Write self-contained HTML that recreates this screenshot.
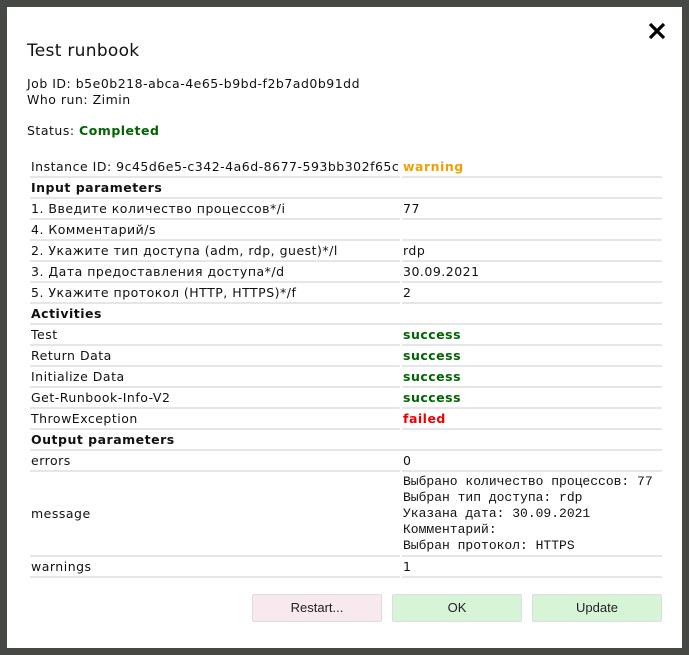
<!DOCTYPE html>
<html><head><meta charset="utf-8"><style>
html,body{margin:0;padding:0;width:689px;height:655px;background:#464844;overflow:hidden}
.dlg{position:absolute;left:7px;top:7px;width:675px;height:641px;background:#fff}
body{font-family:"DejaVu Sans","Liberation Sans",sans-serif;font-size:12.5px;letter-spacing:0.5px;color:#111}
.t{position:absolute;left:20px;top:34px;font-size:17px;letter-spacing:0.3px}
.x{position:absolute;left:640px;top:14px}
.info{position:absolute;left:20px;top:69px;line-height:16px}
.st{position:absolute;left:20px;top:116px}
.g{color:#006400;font-weight:bold}
table{position:absolute;left:21px;top:150px;border-collapse:separate;border-spacing:2px 0;width:636px}
td{height:19px;border-bottom:2px solid #e6e6e6;padding:0 0 0 1px;vertical-align:middle;white-space:nowrap}
td.a{width:369px}
.h{font-weight:bold}
.ok{color:#006400;font-weight:bold}
.f{color:#e00;font-weight:bold}
.w{color:#f0a000;font-weight:bold}
pre{margin:0;font-family:"Liberation Mono",monospace;font-size:13px;line-height:16px;letter-spacing:0}
.b{position:absolute;top:587px;width:128px;height:26px;border:1px solid #ddd;border-radius:2px;font-family:"Liberation Sans",sans-serif;font-size:13px;letter-spacing:0;text-align:center;line-height:26px;color:#222}
</style></head><body><div class="dlg">
<div class="t">Test runbook</div>
<svg class="x" width="20" height="20" viewBox="0 0 20 20"><path d="M3 3L17 17M17 3L3 17" stroke="#000" stroke-width="3.2"/></svg>
<div class="info">Job ID: b5e0b218-abca-4e65-b9bd-f2b7ad0b91dd<br>Who run: Zimin</div>
<div class="st">Status: <span class="g">Completed</span></div>
<table>
<tr><td class="a">Instance ID: 9c45d6e5-c342-4a6d-8677-593bb302f65c</td><td class="w">warning</td></tr>
<tr><td colspan="2" class="h">Input parameters</td></tr>
<tr><td class="a">1. Введите количество процессов*/i</td><td>77</td></tr>
<tr><td class="a">4. Комментарий/s</td><td></td></tr>
<tr><td class="a">2. Укажите тип доступа (adm, rdp, guest)*/l</td><td>rdp</td></tr>
<tr><td class="a">3. Дата предоставления доступа*/d</td><td>30.09.2021</td></tr>
<tr><td class="a">5. Укажите протокол (HTTP, HTTPS)*/f</td><td>2</td></tr>
<tr><td colspan="2" class="h">Activities</td></tr>
<tr><td class="a">Test</td><td class="ok">success</td></tr>
<tr><td class="a">Return Data</td><td class="ok">success</td></tr>
<tr><td class="a">Initialize Data</td><td class="ok">success</td></tr>
<tr><td class="a">Get-Runbook-Info-V2</td><td class="ok">success</td></tr>
<tr><td class="a">ThrowException</td><td class="f">failed</td></tr>
<tr><td colspan="2" class="h">Output parameters</td></tr>
<tr><td class="a">errors</td><td>0</td></tr>
<tr><td class="a" style="height:83px">message</td><td><pre>Выбрано количество процессов: 77
Выбран тип доступа: rdp
Указана дата: 30.09.2021
Комментарий:
Выбран протокол: HTTPS</pre></td></tr>
<tr><td class="a">warnings</td><td>1</td></tr>
</table>
<div class="b" style="left:245px;background:#f7e9ee">Restart...</div>
<div class="b" style="left:385px;background:#d6f5d6">OK</div>
<div class="b" style="left:525px;background:#d6f5d6">Update</div>
</div></body></html>
